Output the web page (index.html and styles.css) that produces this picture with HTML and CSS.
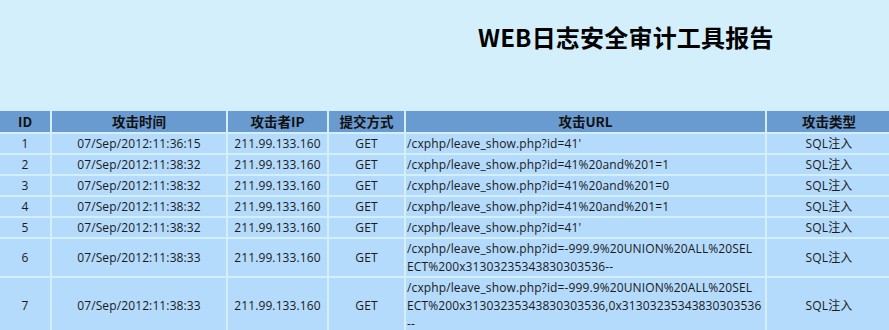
FILE: index.html
```html
<!DOCTYPE html>
<html lang="zh">
<head>
<meta charset="utf-8">
<title>WEB日志安全审计工具报告</title>
<link rel="stylesheet" href="styles.css">
</head>
<body>
<div class="page">
  <h1 class="title">WEB日志安全审计工具报告</h1>
  <table class="report">
    <colgroup>
      <col class="c-id"><col class="c-time"><col class="c-ip"><col class="c-method"><col class="c-url"><col class="c-type">
    </colgroup>
    <thead>
      <tr><th>ID</th><th>攻击时间</th><th>攻击者IP</th><th>提交方式</th><th>攻击URL</th><th>攻击类型</th></tr>
    </thead>
    <tbody>
      <tr><td>1</td><td>07/Sep/2012:11:36:15</td><td>211.99.133.160</td><td>GET</td><td class="url">/cxphp/leave_show.php?id=41'</td><td>SQL注入</td></tr>
      <tr><td>2</td><td>07/Sep/2012:11:38:32</td><td>211.99.133.160</td><td>GET</td><td class="url">/cxphp/leave_show.php?id=41%20and%201=1</td><td>SQL注入</td></tr>
      <tr><td>3</td><td>07/Sep/2012:11:38:32</td><td>211.99.133.160</td><td>GET</td><td class="url">/cxphp/leave_show.php?id=41%20and%201=0</td><td>SQL注入</td></tr>
      <tr><td>4</td><td>07/Sep/2012:11:38:32</td><td>211.99.133.160</td><td>GET</td><td class="url">/cxphp/leave_show.php?id=41%20and%201=1</td><td>SQL注入</td></tr>
      <tr><td>5</td><td>07/Sep/2012:11:38:32</td><td>211.99.133.160</td><td>GET</td><td class="url">/cxphp/leave_show.php?id=41'</td><td>SQL注入</td></tr>
      <tr><td>6</td><td>07/Sep/2012:11:38:33</td><td>211.99.133.160</td><td>GET</td><td class="url">/cxphp/leave_show.php?id=-999.9%20UNION%20ALL%20SEL<br>ECT%200x31303235343830303536--</td><td>SQL注入</td></tr>
      <tr><td>7</td><td>07/Sep/2012:11:38:33</td><td>211.99.133.160</td><td>GET</td><td class="url">/cxphp/leave_show.php?id=-999.9%20UNION%20ALL%20SEL<br>ECT%200x31303235343830303536,0x31303235343830303536<br>--</td><td>SQL注入</td></tr>
    </tbody>
  </table>
</div>
</body>
</html>
```
FILE: styles.css
```css
html, body {
  margin: 0;
  padding: 0;
  background: #d4effc;
}
.page {
  font-family: "Open Sans", "Noto Sans CJK SC", sans-serif;
  font-size: 12px;
  letter-spacing: 0.12px;
  color: #1a1a1a;
  overflow: hidden;
  width: 889px;
}
.title {
  margin: 0;
  height: 109px;
  box-sizing: border-box;
  padding: 20px 0 0 478px;
  font-family: "Noto Sans CJK SC", sans-serif;
  font-size: 24px;
  letter-spacing: 0.2px;
  font-weight: bold;
  line-height: 34px;
  color: #000;
  white-space: nowrap;
}
.report {
  border-collapse: separate;
  border-spacing: 2px;
  table-layout: fixed;
  width: 895px;
  margin-left: -2px;
}
.c-id { width: 50px; }
.c-time { width: 174px; }
.c-ip { width: 99px; }
.c-method { width: 75px; }
.c-url { width: 359px; }
.c-type { width: 124px; }
.report th {
  background: #6a9bd0;
  color: #111;
  font-family: "Noto Sans CJK SC", sans-serif;
  font-weight: bold;
  font-size: 13.5px;
  letter-spacing: 0;
  height: 21px;
  padding: 0;
  line-height: 21px;
  text-align: center;
}
.report td {
  background: #b5dbfc;
  padding: 1px 0 0 0;
  line-height: 18px;
  text-align: center;
  vertical-align: middle;
}
.report td.url {
  text-align: left;
  padding-left: 1px;
  white-space: nowrap;
  overflow: hidden;
}
```
